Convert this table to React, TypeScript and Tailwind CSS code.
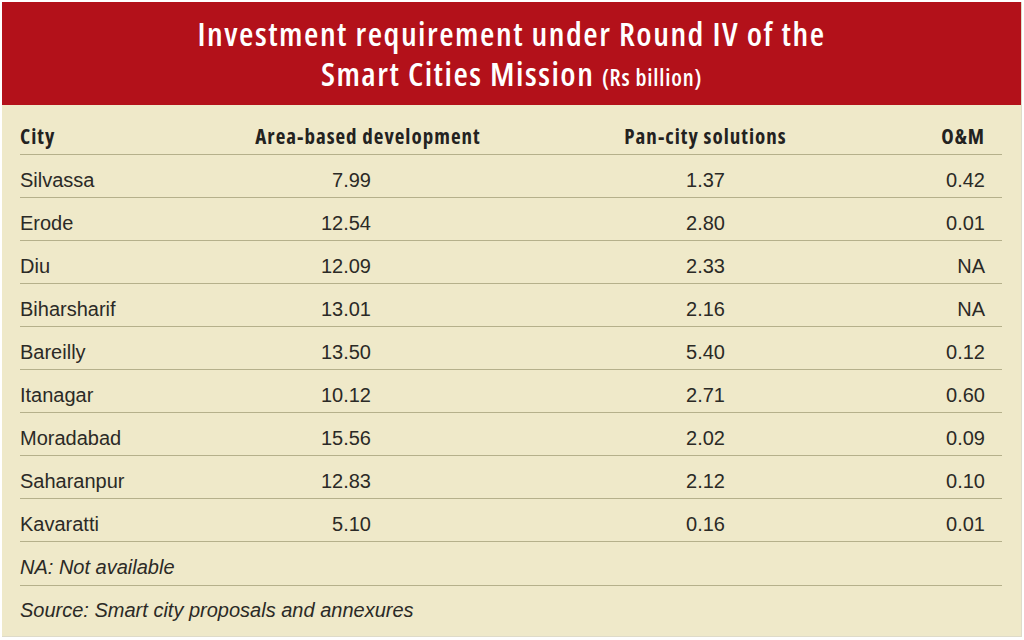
const rows = [
  { city: 'Silvassa', area: '7.99', pan: '1.37', om: '0.42' },
  { city: 'Erode', area: '12.54', pan: '2.80', om: '0.01' },
  { city: 'Diu', area: '12.09', pan: '2.33', om: 'NA' },
  { city: 'Biharsharif', area: '13.01', pan: '2.16', om: 'NA' },
  { city: 'Bareilly', area: '13.50', pan: '5.40', om: '0.12' },
  { city: 'Itanagar', area: '10.12', pan: '2.71', om: '0.60' },
  { city: 'Moradabad', area: '15.56', pan: '2.02', om: '0.09' },
  { city: 'Saharanpur', area: '12.83', pan: '2.12', om: '0.10' },
  { city: 'Kavaratti', area: '5.10', pan: '0.16', om: '0.01' },
];

const grid = 'grid grid-cols-[198px_300px_375px_110px]';
const body = "font-['Liberation_Sans',Arial,sans-serif] text-[20px] text-[#2b2a26]";

export default function App() {
  return (
    <div className="w-[1024px] h-[640px] bg-white p-[2px] pb-[3px]">
      <div className="h-full flex flex-col bg-[#efe9c9] border-r border-b border-[#dedbc9]">
        <div className="h-[103px] bg-[#b3111a] flex flex-col items-center justify-center pt-[4px] font-['Open_Sans',sans-serif] [font-stretch:75%] font-semibold text-white leading-[40px] tracking-[1.5px]">
          <div className="text-[33px]">Investment requirement under Round IV of the</div>
          <div className="text-[33px]">
            Smart Cities Mission <span className="text-[23px] tracking-[0.8px]">(Rs billion)</span>
          </div>
        </div>

        <div className="mx-[18px] mr-[19px]">
          <div className={`${grid} h-[50px] items-center pt-[14px] border-b border-[#b5b08b] font-['Open_Sans',sans-serif] [font-stretch:75%] font-bold text-[21px] text-[#23221f] tracking-[1px]`}>
            <div>City</div>
            <div className="text-center">Area-based development</div>
            <div className="text-center">Pan-city solutions</div>
            <div className="text-right pr-[18px]">O&amp;M</div>
          </div>

          {rows.map((r) => (
            <div key={r.city} className={`${grid} ${body} h-[43px] items-center pt-[7px] border-b border-[#b5b08b]`}>
              <div>{r.city}</div>
              <div className="text-right pr-[147px]">{r.area}</div>
              <div className="text-center">{r.pan}</div>
              <div className="text-right pr-[18px]">{r.om}</div>
            </div>
          ))}

          <div className={`${body} italic h-[44px] flex items-center pt-[7px] border-b border-[#b5b08b]`}>
            NA: Not available
          </div>
          <div className={`${body} italic h-[46px] flex items-center pt-[2px]`}>
            Source: Smart city proposals and annexures
          </div>
        </div>
      </div>
    </div>
  );
}
